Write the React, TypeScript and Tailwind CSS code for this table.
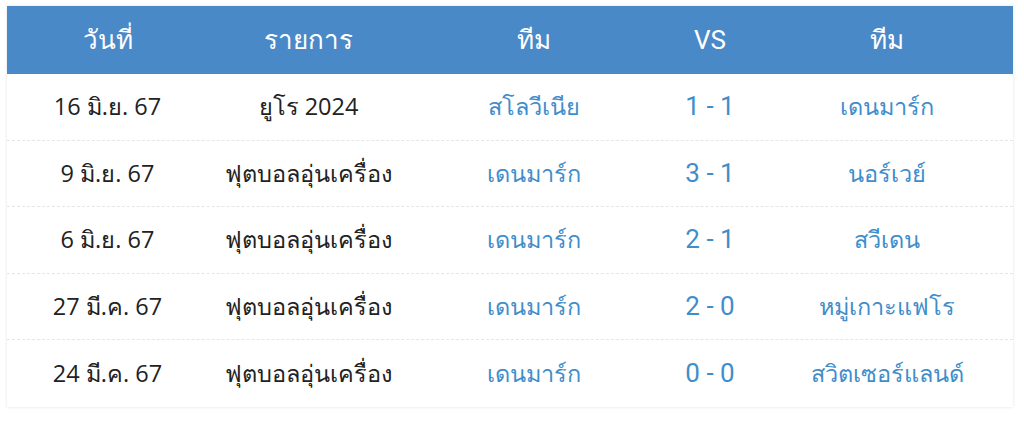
import React from "react";

const rows = [
  ["16 มิ.ย. 67", "ยูโร 2024", "สโลวีเนีย", "1 - 1", "เดนมาร์ก"],
  ["9 มิ.ย. 67", "ฟุตบอลอุ่นเครื่อง", "เดนมาร์ก", "3 - 1", "นอร์เวย์"],
  ["6 มิ.ย. 67", "ฟุตบอลอุ่นเครื่อง", "เดนมาร์ก", "2 - 1", "สวีเดน"],
  ["27 มี.ค. 67", "ฟุตบอลอุ่นเครื่อง", "เดนมาร์ก", "2 - 0", "หมู่เกาะแฟโร"],
  ["24 มี.ค. 67", "ฟุตบอลอุ่นเครื่อง", "เดนมาร์ก", "0 - 0", "สวิตเซอร์แลนด์"],
];

const grid = "grid grid-cols-[201px_201px_250px_102px_252px]";

export default function App() {
  return (
    <div className="w-[1024px] h-[422px] bg-white pt-[6px] pl-[7px]">
      <div
        className="w-[1006px] bg-white shadow-[0_0_3px_rgba(0,0,0,0.12)]"
        style={{ fontFamily: "'Open Sans', 'Noto Sans', sans-serif" }}
      >
        <div
          className={`${grid} h-[68px] items-center bg-[#4a89c8] text-white text-[26px] font-normal`}
          style={{ fontFamily: "Roboto, 'Noto Sans', sans-serif" }}
        >
          <div className="text-center">วันที่</div>
          <div className="text-center">รายการ</div>
          <div className="text-center">ทีม</div>
          <div className="text-center">VS</div>
          <div className="text-center">ทีม</div>
        </div>
        {rows.map((r, i) => (
          <div
            key={i}
            className={`${grid} h-[66.5px] items-center text-[23.5px] ${
              i < rows.length - 1 ? "border-b border-dashed border-[#e6e6e6]" : ""
            }`}
          >
            <div className="text-center text-[#222]">{r[0]}</div>
            <div className="text-center text-[#222]">{r[1]}</div>
            <div className="text-center text-[#3f8ecb]">{r[2]}</div>
            <div
              className="text-center text-[#3f8ecb] text-[26px]"
              style={{ fontFamily: "Roboto, sans-serif" }}
            >
              {r[3]}
            </div>
            <div className="text-center text-[#3f8ecb]">{r[4]}</div>
          </div>
        ))}
      </div>
    </div>
  );
}
